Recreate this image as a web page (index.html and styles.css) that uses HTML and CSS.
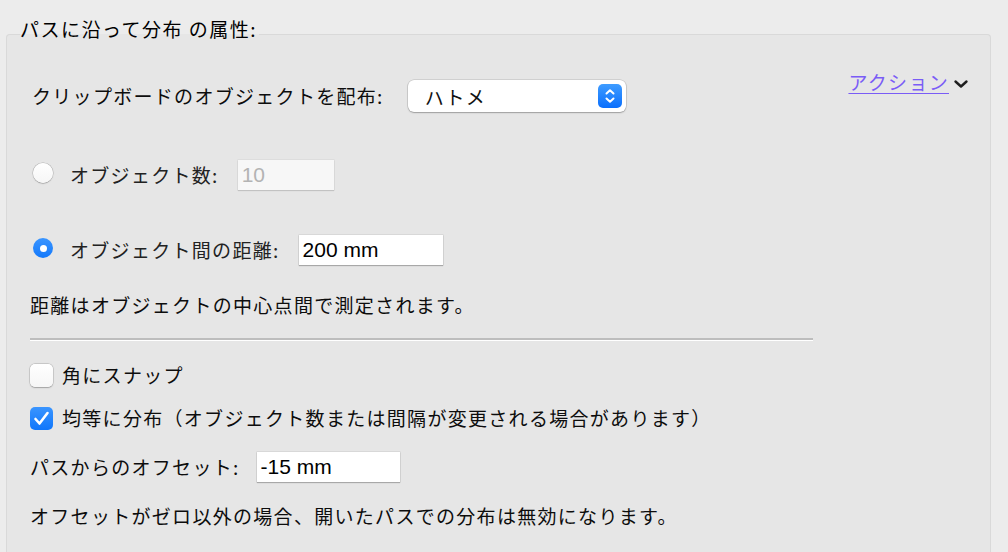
FILE: index.html
```html
<!DOCTYPE html>
<html lang="ja">
<head>
<meta charset="utf-8">
<link rel="stylesheet" href="styles.css">
</head>
<body>
<fieldset class="group">
  <legend class="group-title">パスに沿って分布 の属性:</legend>

  <div class="row row-top">
    <div class="clip-row">
      <span class="label">クリップボードのオブジェクトを配布:</span>
      <div class="select">
        <span class="select-text">ハトメ</span>
        <span class="stepper">
          <svg width="24" height="24" viewBox="0 0 24 24"><path d="M8.5 9.5 L12 6.2 L15.5 9.5" fill="none" stroke="#fff" stroke-width="2" stroke-linecap="round" stroke-linejoin="round"/><path d="M8.5 14.5 L12 17.8 L15.5 14.5" fill="none" stroke="#fff" stroke-width="2" stroke-linecap="round" stroke-linejoin="round"/></svg>
        </span>
      </div>
    </div>
    <div class="actions">
      <a class="actions-link" href="#">アクション</a>
      <svg class="chev" width="16" height="12" viewBox="0 0 16 12"><path d="M2.5 3.5 L8 8.5 L13.5 3.5" fill="none" stroke="#1e1e1e" stroke-width="2.4" stroke-linecap="round" stroke-linejoin="round"/></svg>
    </div>
  </div>

  <div class="row row-count">
    <span class="radio"></span>
    <span class="label label-muted">オブジェクト数:</span>
    <span class="field field-disabled field-count">10</span>
  </div>

  <div class="row row-dist">
    <span class="radio radio-on"></span>
    <span class="label label-muted">オブジェクト間の距離:</span>
    <span class="field field-dist">200 mm</span>
  </div>

  <p class="note note-dist">距離はオブジェクトの中心点間で測定されます。</p>

  <div class="sep"></div>

  <div class="row row-check1">
    <span class="check"></span>
    <span class="label">角にスナップ</span>
  </div>

  <div class="row row-check2">
    <span class="check check-on">
      <svg width="23" height="23" viewBox="0 0 23 23"><path d="M5.5 12 L9.5 16.5 L17.5 6" fill="none" stroke="#fff" stroke-width="2.6" stroke-linecap="round" stroke-linejoin="round"/></svg>
    </span>
    <span class="label">均等に分布（オブジェクト数または間隔が変更される場合があります）</span>
  </div>

  <div class="row row-offset">
    <span class="label">パスからのオフセット:</span>
    <span class="field field-offset">-15 mm</span>
  </div>

  <p class="note note-offset">オフセットがゼロ以外の場合、開いたパスでの分布は無効になります。</p>
</fieldset>
</body>
</html>
```

FILE: styles.css
```css
html, body {
  margin: 0;
  padding: 0;
  background: #ececec;
  height: 552px;
  overflow: hidden;
}

body {
  font-family: "Noto Sans CJK JP", "Noto Sans", sans-serif;
  font-size: 19px;
  font-weight: 400;
  color: #0d0d0d;
  padding-top: 19px;
}

.group {
  margin: 0 17px 0 6px;
  border: 1px solid #d9d9d9;
  border-bottom: none;
  border-radius: 4px 4px 0 0;
  background: #e6e6e6;
  padding: 23px 21px 40px 23px;
  min-height: 560px;
  box-sizing: border-box;
  min-width: 0;
}

.group-title {
  margin-left: -10px;
  padding: 0 2px 10px 0;
  line-height: 20px;
  font-size: 19px;
  letter-spacing: 1.5px;
  color: #000;
}

.row {
  display: flex;
  align-items: center;
}

.label {
  letter-spacing: 1.3px;
  white-space: nowrap;
  line-height: 24px;
}

.label-muted {
  color: #222;
}

.row-top {
  justify-content: space-between;
  align-items: flex-start;
}

.clip-row {
  display: flex;
  align-items: center;
  margin-top: 8px;
  margin-left: 2px;
  gap: 24px;
}

.select {
  width: 218px;
  height: 32px;
  box-sizing: border-box;
  background: #fff;
  border-radius: 6px;
  box-shadow: 0 0 0 0.5px rgba(0, 0, 0, 0.18), 0 1px 1.5px rgba(0, 0, 0, 0.25);
  display: flex;
  align-items: center;
  justify-content: space-between;
  padding: 0 4px 0 17px;
}

.select-text {
  letter-spacing: 1.3px;
  color: #111;
}

.stepper {
  width: 24px;
  height: 24px;
  border-radius: 5px;
  background: linear-gradient(#3f9cff, #0a6ffd);
  display: block;
}

.stepper svg {
  display: block;
}

.actions {
  display: flex;
  align-items: center;
  gap: 4px;
  line-height: 20px;
}

.actions-link {
  color: #7a5cf6;
  letter-spacing: 1.3px;
  text-decoration: underline;
  text-underline-offset: 3px;
  text-decoration-thickness: 1px;
}

.chev {
  display: block;
  margin-top: 3px;
}

.radio {
  width: 20px;
  height: 20px;
  border-radius: 50%;
  box-sizing: border-box;
  background: linear-gradient(#ffffff, #f6f6f6);
  box-shadow: 0 0 0 0.5px rgba(0, 0, 0, 0.2), 0 0.5px 1.5px rgba(0, 0, 0, 0.25);
  margin-left: 3px;
  margin-right: 17px;
  position: relative;
  top: -2px;
}

.radio-on {
  background: linear-gradient(#3a95ff, #1479fb);
  box-shadow: none;
}

.radio-on::after {
  content: "";
  position: absolute;
  left: 6.5px;
  top: 6.5px;
  width: 7px;
  height: 7px;
  border-radius: 50%;
  background: #fff;
}

.field {
  height: 30px;
  box-sizing: border-box;
  background: #fff;
  box-shadow: 0 0 0 0.5px rgba(0, 0, 0, 0.12), 0 1px 1px rgba(0, 0, 0, 0.22);
  font-family: "Liberation Sans", Arial, sans-serif;
  font-weight: 400;
  font-size: 21px;
  line-height: 30px;
  padding-left: 4px;
  color: #000;
}

.field-disabled {
  background: #f7f7f7;
  color: #b3b3b3;
  box-shadow: 0 0 0 0.5px rgba(0, 0, 0, 0.08), 0 1px 1px rgba(0, 0, 0, 0.12);
}

.row-count {
  margin-top: 48px;
}

.field-count {
  width: 96px;
  margin-left: 19px;
}

.row-dist {
  margin-top: 45px;
}

.field-dist {
  width: 144px;
  margin-left: 19px;
}

.note {
  margin: 0;
  line-height: 24px;
  letter-spacing: 1.3px;
  white-space: nowrap;
  color: #0d0d0d;
}

.note-dist {
  margin-top: 28px;
}

.sep {
  width: 783px;
  height: 2px;
  background: #bdbdbd;
  border-bottom: 1px solid #ffffff;
  margin-top: 21px;
}

.check {
  width: 23px;
  height: 23px;
  box-sizing: border-box;
  border-radius: 5px;
  background: linear-gradient(#ffffff, #f6f6f6);
  box-shadow: 0 0 0 0.5px rgba(0, 0, 0, 0.2), 0 0.5px 1.5px rgba(0, 0, 0, 0.22);
  margin-right: 9px;
}

.check-on {
  background: linear-gradient(#3a95ff, #1076fb);
  box-shadow: none;
}

.check svg {
  display: block;
}

.row-check1 {
  margin-top: 22px;
}

.row-check2 {
  margin-top: 19px;
}

.row-offset {
  margin-top: 22px;
}

.field-offset {
  width: 143px;
  margin-left: 17px;
}

.note-offset {
  margin-top: 22px;
}
```
